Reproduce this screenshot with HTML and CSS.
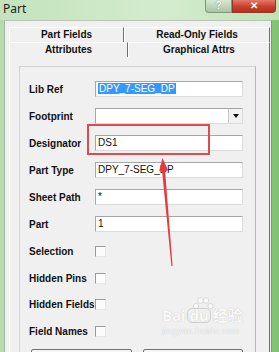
FILE: index.html
```html
<!DOCTYPE html>
<html lang="en">
<head>
  <meta charset="UTF-8">
  <title>Part</title>
  <link rel="stylesheet" href="styles.css">
</head>
<body>

  <div class="window">
    <div class="titlebar">
      <span class="title">Part</span>
      <div class="caption-btns">
        <div class="cap-help">?</div>
        <div class="cap-close">&#x2715;</div>
      </div>
    </div>

    <div class="frame">
      <div class="client">

        <div class="tabrow back">
          <div class="tab first">Part Fields</div>
          <div class="tab">Read-Only Fields</div>
        </div>
        <div class="tabrow front">
          <div class="tab first active">Attributes</div>
          <div class="tab">Graphical Attrs</div>
        </div>

        <div class="panel">
          <div class="group">

            <div class="field">
              <label>Lib Ref</label>
              <div class="input"><span class="selected">DPY_7-SEG_DP</span></div>
            </div>
            <div class="field">
              <label>Footprint</label>
              <div class="input combo"><span></span><div class="drop"></div></div>
            </div>
            <div class="field">
              <label>Designator</label>
              <div class="input">DS1</div>
            </div>
            <div class="field">
              <label>Part Type</label>
              <div class="input">DPY_7-SEG_DP</div>
            </div>
            <div class="field">
              <label>Sheet Path</label>
              <div class="input">*</div>
            </div>
            <div class="field">
              <label>Part</label>
              <div class="input">1</div>
            </div>

            <div class="check first">
              <label>Selection</label>
              <div class="box"></div>
            </div>
            <div class="check">
              <label>Hidden Pins</label>
              <div class="box"></div>
            </div>
            <div class="check">
              <label>Hidden Fields</label>
              <div class="box"></div>
            </div>
            <div class="check">
              <label>Field Names</label>
              <div class="box"></div>
            </div>

            <!-- only the top edge of the dialog buttons is in view -->
            <div class="buttons">
              <div class="btn"></div>
              <div class="btn"></div>
            </div>

          </div>
        </div>

      </div>
    </div>

    <!-- annotation overlays from the screenshot -->
    <div class="highlight-box"></div>
    <svg class="arrow" width="279" height="352" viewBox="0 0 279 352">
      <polygon points="162.5,158 168.1,170.5 165.1,170.8 172.6,266 171.4,266 162.1,171 159.1,171.3" fill="#e8393e"/>
    </svg>

    <div class="watermark">
      <svg class="paw" width="24" height="16" viewBox="0 0 24 16">
        <circle cx="5" cy="10" r="2.6"/>
        <circle cx="9.5" cy="4.5" r="2.8"/>
        <circle cx="15" cy="4.5" r="2.8"/>
        <circle cx="19.5" cy="10" r="2.6"/>
      </svg>
      <div class="wm-line">Bai<span class="wm-du">du</span>经验</div>
      <div class="wm-url">jingyan.baidu.com</div>
    </div>
  </div>

</body>
</html>
```

FILE: styles.css
```css
* {
  margin: 0;
  padding: 0;
  box-sizing: border-box;
}

body {
  width: 279px;
  height: 352px;
  overflow: hidden;
  background: #c7e5c0;
  font-family: 'Liberation Sans', Arial, sans-serif;
  color: #111;
}

.window {
  position: relative;
  width: 279px;
  height: 352px;
  overflow: hidden;
  display: flex;
  flex-direction: column;
}

/* title bar */
.titlebar {
  flex: none;
  height: 20px;
  display: flex;
  justify-content: space-between;
  background: linear-gradient(to right, #c4e3bc, #d3ecce 60%, #bfe2b6);
}

.title {
  font-family: 'Noto Sans', sans-serif;
  font-size: 12px;
  line-height: 17px;
  padding-left: 3px;
  color: #1d1d1d;
}

.caption-btns {
  display: flex;
  height: 13px;
  margin-right: 3px;
}

.cap-help {
  width: 27px;
  border: 1px solid #7e9a7a;
  border-top: none;
  border-radius: 0 0 0 4px;
  background: linear-gradient(#d7e8d3, #a9c5a4);
  color: #fff;
  font-size: 10px;
  font-weight: bold;
  text-align: center;
  line-height: 11px;
  text-shadow: 0 0 1px #4f6b4b;
}

.cap-close {
  width: 44px;
  border: 1px solid #8c3a2e;
  border-top: none;
  border-radius: 0 0 4px 0;
  background: linear-gradient(#e47a6a, #c8402c 55%, #b6301f);
  color: #fff;
  font-size: 10px;
  font-weight: bold;
  text-align: center;
  line-height: 11px;
}

/* window frame and client area */
.frame {
  flex: 1;
  min-height: 0;
  overflow: hidden;
  padding: 0 7px 0 4px;
  background: linear-gradient(to right, #b5dbad, #c9e6c3 50%, #7fc473);
}

.client {
  height: 100%;
  overflow: hidden;
  background: #f0f0f0;
  border-left: 1px solid #a7b3a5;
  border-top: 1px solid #b9c4b7;
  border-right: 1px solid #8b8f8b;
  padding: 6px 1px 0 4px;
}

/* tabs */
.tabrow {
  display: flex;
  height: 15px;
}

.tab {
  flex: 1;
  border-top: 1px solid #fff;
  border-left: 1px solid #fff;
  border-right: 1px solid #6f6f6f;
  font-size: 10px;
  font-weight: bold;
  text-align: center;
  line-height: 14px;
}

.back .tab.first {
  flex: none;
  width: 115px;
}

.front .tab.first {
  flex: none;
  width: 119px;
}

.front .tab {
  line-height: 13px;
}

/* tab page */
.panel {
  height: 300px;
  border-left: 1px solid #fff;
  border-right: 1px solid #6f6f6f;
  padding: 9px 13px 0 9px;
}

.group {
  height: 300px;
  border: 1px solid #d4d4d4;
  border-right-color: #b8b8b8;
  padding: 14px 12px 0 9px;
}

.field {
  display: flex;
  align-items: center;
  height: 16px;
  margin-bottom: 11px;
}

.field label,
.check label {
  width: 66px;
  font-size: 10px;
  font-weight: bold;
  white-space: nowrap;
}

.input {
  width: 148px;
  height: 16px;
  background: #fff;
  border: 1px solid #a6a6a6;
  border-right-color: #dcdcdc;
  border-bottom-color: #dcdcdc;
  font-size: 10px;
  line-height: 14px;
  padding-left: 2px;
}

.selected {
  background: #3399ff;
  color: #fff;
  padding: 0 1px;
}

.combo {
  display: flex;
  justify-content: space-between;
  padding-left: 0;
}

.drop {
  width: 14px;
  height: 14px;
  border-left: 1px solid #c8c8c8;
  background: #f2f2f2;
  position: relative;
}

.drop::after {
  content: "";
  position: absolute;
  left: 4px;
  top: 5px;
  border-left: 3px solid transparent;
  border-right: 3px solid transparent;
  border-top: 4px solid #111;
}

.check {
  display: flex;
  align-items: center;
  height: 11px;
  margin-bottom: 15.7px;
}

.check.first {
  margin-top: 14px;
}

.box {
  width: 11px;
  height: 11px;
  background: #fbfbfb;
  border: 1px solid #9a9a9a;
  border-right-color: #e6e6e6;
  border-bottom-color: #e6e6e6;
}

.buttons {
  display: flex;
  gap: 11px;
  margin: -4px 0 0 2px;
}

.btn {
  width: 110px;
  height: 24px;
  border: 1px solid #707070;
  border-radius: 2px;
  background: linear-gradient(#f6f6f6, #dedede);
}

/* annotations painted over the dialog */
.highlight-box {
  position: absolute;
  left: 87px;
  top: 124px;
  width: 123px;
  height: 31px;
  border: 2px solid #df4a4f;
}

.arrow {
  position: absolute;
  left: 0;
  top: 0;
}

.watermark {
  position: absolute;
  left: 162px;
  top: 296px;
  width: 90px;
  color: #f9f9f9;
  text-shadow: 0 0 1px #b9b9b9;
}

.paw {
  position: absolute;
  left: 29px;
  top: 0;
  fill: #fafafa;
  stroke: #c4c4c4;
  stroke-width: 0.6;
}

.wm-line {
  margin-top: 12px;
  font-family: 'Noto Sans', 'Noto Sans CJK SC', sans-serif;
  font-size: 15px;
  font-weight: bold;
  line-height: 15px;
  white-space: nowrap;
}

.wm-du {
  display: inline-block;
  margin: 0 2px;
  padding: 0 1px;
  border-radius: 5px;
  border: 1px solid #cfcfcf;
  line-height: 13px;
}

.wm-url {
  margin-top: 3px;
  font-size: 9px;
  line-height: 10px;
  letter-spacing: 0.3px;
}
```
